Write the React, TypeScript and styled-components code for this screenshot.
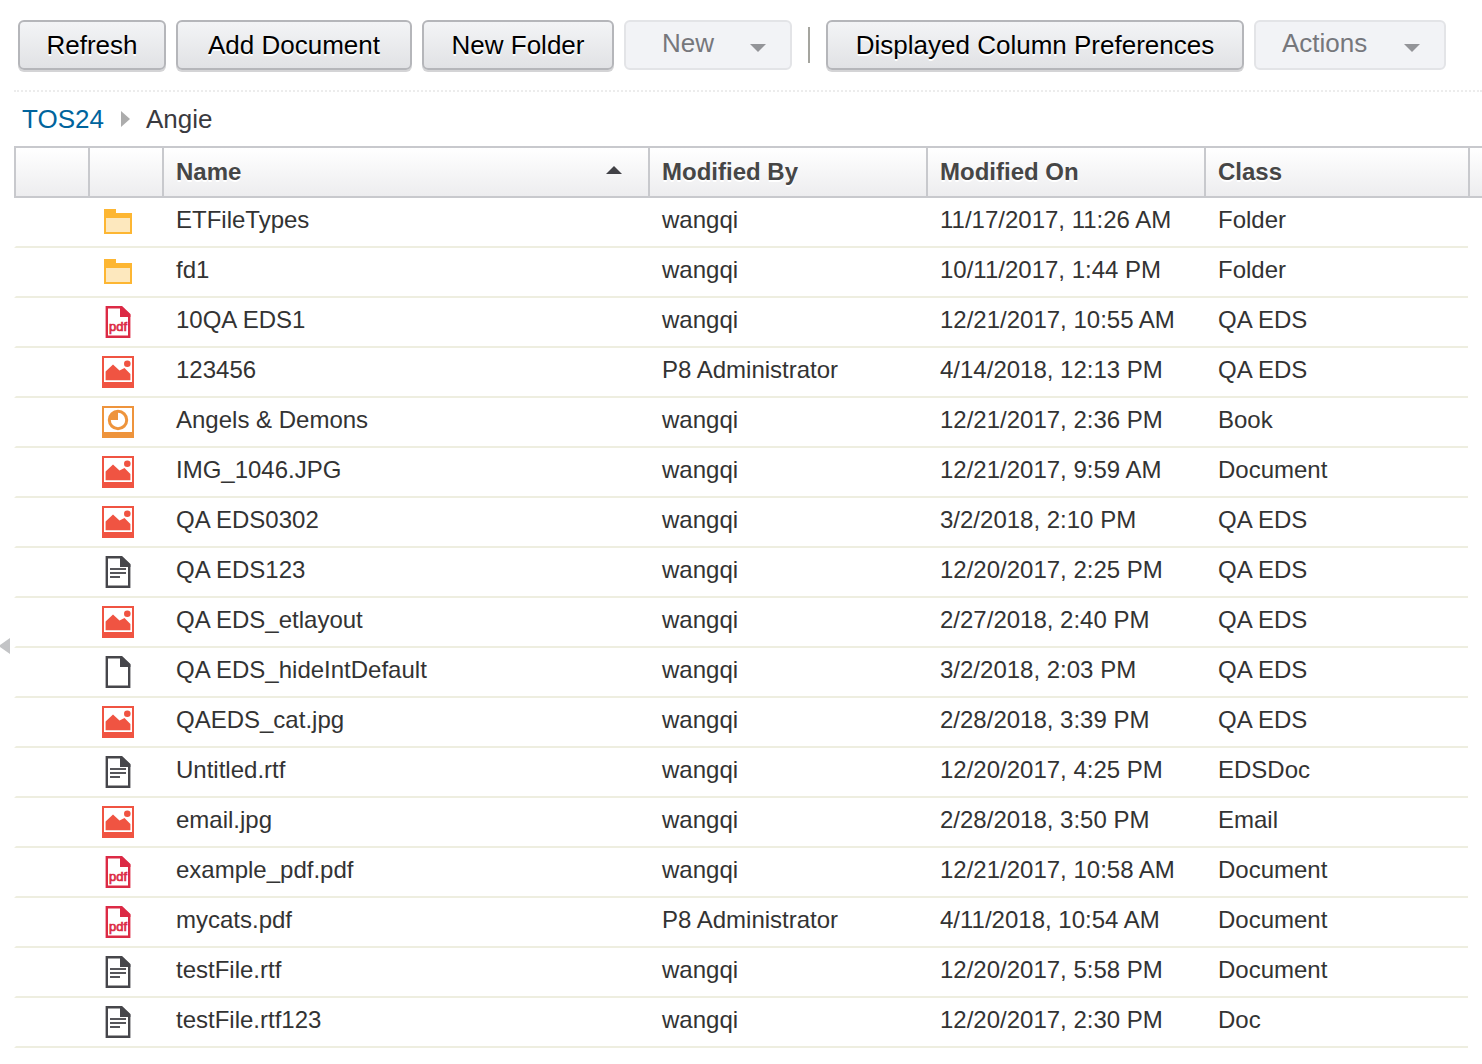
import React from "react";
import styled, { createGlobalStyle } from "styled-components";

const GlobalStyle = createGlobalStyle`
  *, *::before, *::after { box-sizing: border-box; }
  body {
    margin: 0;
    background: #fff;
    color: #333;
    font-family: "Liberation Sans", Arial, Helvetica, sans-serif;
  }
`;

const Page = styled.div`
  display: flex;
  min-height: 100vh;
`;

const Splitter = styled.aside`
  flex: none;
  width: 14px;
  padding-top: 638px;
`;

const CollapseButton = styled.button`
  display: block;
  padding: 0;
  border: 0;
  background: none;
  line-height: 0;
`;

const Main = styled.main`
  flex: 1;
  min-width: 0;
`;

const Toolbar = styled.div`
  display: flex;
  align-items: center;
  gap: 10px;
  padding: 20px 4px;
  border-bottom: 2px dotted #ececec;
`;

const ToolButton = styled.button<{ $width: number }>`
  flex: none;
  min-width: ${(p) => p.$width}px;
  height: 50px;
  padding: 0 12px;
  border: 2px solid #b5b6ba;
  border-radius: 6px;
  background: linear-gradient(#f3f4f6, #e1e2e5);
  box-shadow: 0 2px 0 #d4d4d6;
  color: #000;
  font: 26px/46px "Liberation Sans", Arial, sans-serif;
  text-shadow: 0 2px 0 #fff;
  white-space: nowrap;
`;

const MenuButton = styled(ToolButton)`
  display: flex;
  justify-content: space-between;
  padding: 0 24px 0 ${(p) => (p.$width > 180 ? 26 : 36)}px;
  border-color: #e3e4e7;
  background: #f2f3f6;
  box-shadow: none;
  color: #76777c;
  line-height: 42px;
  text-shadow: none;
`;

const MenuArrow = styled.svg`
  flex: none;
  align-self: center;
  margin-top: 6px;
`;

const Divider = styled.span`
  flex: none;
  width: 2px;
  height: 36px;
  margin: 0 6px;
  background: #a5a59f;
`;

const Breadcrumb = styled.nav`
  display: flex;
  align-items: center;
  height: 54px;
  padding: 0 8px;
  gap: 16px;
  font-size: 26px;
  line-height: 30px;
`;

const CrumbLink = styled.a`
  color: #00649d;
  text-decoration: none;
`;

const CurrentCrumb = styled.span`
  color: #3a3a3f;
`;

const Grid = styled.table`
  width: 100%;
  table-layout: fixed;
  border-collapse: separate;
  border-spacing: 0;
`;

const Column = styled.col<{ $width?: number }>`
  width: ${(p) => (p.$width ? `${p.$width}px` : "auto")};
`;

const HeadCell = styled.th`
  height: 52px;
  padding: 0 26px 0 12px;
  border: 2px solid #c8c9cd;
  border-right: 0;
  background: linear-gradient(#fff, #ededef);
  color: #464646;
  font-size: 24px;
  line-height: 28px;
  text-align: left;
  text-shadow: 0 2px 0 #fff;
`;

const HeadLabel = styled.span`
  display: flex;
  align-items: center;
  justify-content: space-between;
  white-space: nowrap;
`;

const Cell = styled.td`
  height: 50px;
  padding: 0 0 4px 14px;
  border-bottom: 2px solid #eeeee0;
  font-size: 24px;
  line-height: 28px;
  white-space: nowrap;

  &:first-child { border-left: 2px solid #fff; }
  &:last-child { border-bottom: 0; }
`;

const IconCell = styled(Cell)`
  padding-bottom: 0;
  line-height: 0;
`;

type Kind = "folder" | "pdf" | "image" | "slides" | "text" | "blank";

function PageOutline({ color }: { color: string }) {
  return (
    <>
      <path d="M4.8 1.2H19L27.2 9V30.8H4.8Z" fill="#fff" stroke={color} strokeWidth="2.4" />
      <path d="M18 0H20L28.4 8V11H18Z" fill={color} />
    </>
  );
}

const drawings: Record<Kind, React.ReactNode> = {
  folder: (
    <>
      <path d="M2 3H14V7H30V28H2Z" fill="#fdb632" />
      <path d="M4 12H28V26H4Z" fill="#fde8be" />
    </>
  ),
  pdf: (
    <>
      <PageOutline color="#dc2a45" />
      <text x="16" y="25" textAnchor="middle" fontFamily="Liberation Sans, Arial, sans-serif" fontSize="13" fill="#dc2a45" stroke="#dc2a45" strokeWidth="0.7">pdf</text>
    </>
  ),
  image: (
    <>
      <path d="M0 0H32V32H0Z" fill="#f05442" />
      <path d="M2 2H30V26H2Z" fill="#fff" />
      <path d="M3.6 24.2V15.5L11 8.5L17.5 14.5L22.5 12L28.4 18V24.2Z" fill="#f05442" />
      <circle cx="25.3" cy="7.8" r="3.3" fill="#f05442" />
    </>
  ),
  slides: (
    <>
      <path d="M0 0H32V32H0Z" fill="#ee943c" />
      <path d="M2 2H30V26H2Z" fill="#fff" />
      <circle cx="16" cy="14" r="8.7" fill="none" stroke="#ee943c" strokeWidth="3" />
      <path d="M16 14V5A9 9 0 0 0 7 14Z" fill="#ee943c" />
    </>
  ),
  text: (
    <>
      <PageOutline color="#46464b" />
      <path d="M8 13H24M8 17H24M8 21H18" stroke="#55555a" strokeWidth="2.2" />
    </>
  ),
  blank: <PageOutline color="#46464b" />,
};

function FileIcon({ kind }: { kind: Kind }) {
  return (
    <svg width="32" height="32" viewBox="0 0 32 32" role="img" aria-label={kind}>
      {drawings[kind]}
    </svg>
  );
}

function DownArrow() {
  return (
    <MenuArrow width="16" height="8" viewBox="0 0 16 8" aria-hidden="true">
      <path d="M0 0H16L8 8Z" fill="#939498" />
    </MenuArrow>
  );
}

const files: [Kind, string, string, string, string][] = [
  ["folder", "ETFileTypes", "wangqi", "11/17/2017, 11:26 AM", "Folder"],
  ["folder", "fd1", "wangqi", "10/11/2017, 1:44 PM", "Folder"],
  ["pdf", "10QA EDS1", "wangqi", "12/21/2017, 10:55 AM", "QA EDS"],
  ["image", "123456", "P8 Administrator", "4/14/2018, 12:13 PM", "QA EDS"],
  ["slides", "Angels & Demons", "wangqi", "12/21/2017, 2:36 PM", "Book"],
  ["image", "IMG_1046.JPG", "wangqi", "12/21/2017, 9:59 AM", "Document"],
  ["image", "QA EDS0302", "wangqi", "3/2/2018, 2:10 PM", "QA EDS"],
  ["text", "QA EDS123", "wangqi", "12/20/2017, 2:25 PM", "QA EDS"],
  ["image", "QA EDS_etlayout", "wangqi", "2/27/2018, 2:40 PM", "QA EDS"],
  ["blank", "QA EDS_hideIntDefault", "wangqi", "3/2/2018, 2:03 PM", "QA EDS"],
  ["image", "QAEDS_cat.jpg", "wangqi", "2/28/2018, 3:39 PM", "QA EDS"],
  ["text", "Untitled.rtf", "wangqi", "12/20/2017, 4:25 PM", "EDSDoc"],
  ["image", "email.jpg", "wangqi", "2/28/2018, 3:50 PM", "Email"],
  ["pdf", "example_pdf.pdf", "wangqi", "12/21/2017, 10:58 AM", "Document"],
  ["pdf", "mycats.pdf", "P8 Administrator", "4/11/2018, 10:54 AM", "Document"],
  ["text", "testFile.rtf", "wangqi", "12/20/2017, 5:58 PM", "Document"],
  ["text", "testFile.rtf123", "wangqi", "12/20/2017, 2:30 PM", "Doc"],
];

export default function App() {
  return (
    <Page>
      <GlobalStyle />
      <Splitter>
        <CollapseButton type="button" aria-label="Collapse panel">
          <svg width="10" height="16" viewBox="0 0 10 16">
            <path d="M10 0V16L0 9V7Z" fill="#c3c4c6" />
          </svg>
        </CollapseButton>
      </Splitter>
      <Main>
        <Toolbar role="toolbar">
          <ToolButton type="button" $width={148}>Refresh</ToolButton>
          <ToolButton type="button" $width={236}>Add Document</ToolButton>
          <ToolButton type="button" $width={192}>New Folder</ToolButton>
          <MenuButton type="button" $width={168} disabled aria-haspopup="menu">New<DownArrow /></MenuButton>
          <Divider />
          <ToolButton type="button" $width={418}>Displayed Column Preferences</ToolButton>
          <MenuButton type="button" $width={192} disabled aria-haspopup="menu">Actions<DownArrow /></MenuButton>
        </Toolbar>
        <Breadcrumb aria-label="Folder path">
          <CrumbLink href="#TOS24">TOS24</CrumbLink>
          <svg width="10" height="16" viewBox="0 0 10 16" aria-hidden="true">
            <path d="M1 0L10 8L1 16Z" fill="#acacac" />
          </svg>
          <CurrentCrumb>Angie</CurrentCrumb>
        </Breadcrumb>
        <Grid>
          <colgroup>
            <Column $width={74} />
            <Column $width={74} />
            <Column />
            <Column $width={278} />
            <Column $width={278} />
            <Column $width={264} />
            <Column $width={14} />
          </colgroup>
          <thead>
            <tr>
              <HeadCell />
              <HeadCell />
              <HeadCell scope="col" aria-sort="ascending">
                <HeadLabel>
                  Name
                  <svg width="16" height="12" viewBox="0 0 16 12" aria-hidden="true">
                    <path d="M8 0L16 8H0Z" fill="#414146" />
                  </svg>
                </HeadLabel>
              </HeadCell>
              <HeadCell scope="col">Modified By</HeadCell>
              <HeadCell scope="col">Modified On</HeadCell>
              <HeadCell scope="col">Class</HeadCell>
              <HeadCell />
            </tr>
          </thead>
          <tbody>
            {files.map(([kind, name, by, on, type]) => (
              <tr key={name}>
                <Cell />
                <IconCell><FileIcon kind={kind} /></IconCell>
                <Cell>{name}</Cell>
                <Cell>{by}</Cell>
                <Cell>{on}</Cell>
                <Cell>{type}</Cell>
                <Cell />
              </tr>
            ))}
          </tbody>
        </Grid>
      </Main>
    </Page>
  );
}
